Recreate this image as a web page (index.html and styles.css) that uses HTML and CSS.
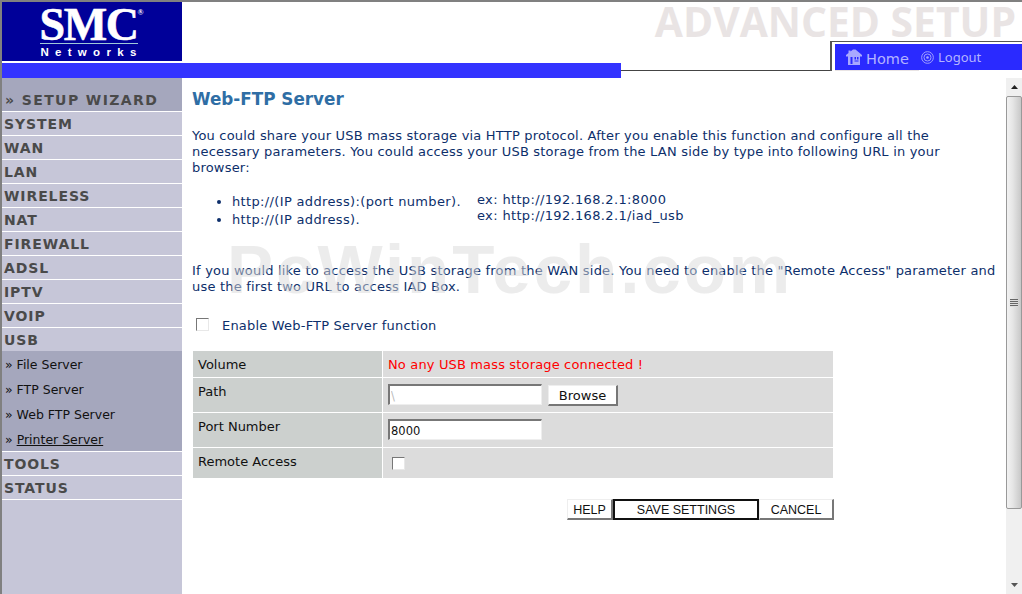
FILE: index.html
```html
<!DOCTYPE html>
<html lang="en">
<head>
<meta charset="utf-8">
<title>Web-FTP Server</title>
<link rel="stylesheet" href="styles.css">
</head>
<body>
<div class="page">
  <header class="header">
    <div class="logo">
      <div class="logo-smc">SMC<sup class="logo-r">®</sup></div>
      <div class="logo-net">Networks</div>
    </div>
    <div class="adv-title">ADVANCED SETUP</div>
    <div class="bar"></div>
    <div class="rule"></div>
    <div class="topnav">
      <nav class="topnav-in">
        <a class="home">
          <svg class="ic-home" viewBox="0 0 16 16" width="16" height="16"><path d="M7 0.500 L9.500 0.500 L16 6 V7.500 H14 V16 H2 V7.500 H0 V6 L2.500 4 V1.500 H4.500 V2.500 Z" fill="#a8a8ff"/><path d="M4.500 8 H6.500 V15 H4.500 Z M8.500 8 H10 V10.500 H8.500 Z M11 8 H12.500 V10.500 H11 Z M8.500 11.500 H12.500 V12.500 H8.500 Z" fill="#2a2aff"/></svg>
          <span>Home</span>
        </a>
        <a class="logout">
          <svg class="ic-logout" viewBox="0 0 14 14" width="13" height="13"><circle cx="7" cy="7" r="6.300" fill="none" stroke="#a8a8ff"/><circle cx="7" cy="7" r="3.800" fill="none" stroke="#a8a8ff"/><circle cx="7" cy="7" r="1.400" fill="#a8a8ff"/></svg>
          <span>Logout</span>
        </a>
      </nav>
      <div class="under"></div>
    </div>
  </header>
  <div class="body">
    <aside class="side">
      <div class="m m-wiz">» SETUP WIZARD</div>
      <div class="m">SYSTEM</div>
      <div class="m">WAN</div>
      <div class="m">LAN</div>
      <div class="m">WIRELESS</div>
      <div class="m">NAT</div>
      <div class="m">FIREWALL</div>
      <div class="m">ADSL</div>
      <div class="m">IPTV</div>
      <div class="m">VOIP</div>
      <div class="m m-usb">USB</div>
      <div class="sub">
        <div class="s">» File Server</div>
        <div class="s">» FTP Server</div>
        <div class="s">» Web FTP Server</div>
        <div class="s">» <u>Printer Server</u></div>
      </div>
      <div class="m">TOOLS</div>
      <div class="m">STATUS</div>
    </aside>
    <main class="main">
      <h1 class="h">Web-FTP Server</h1>
      <p class="p">You could share your USB mass storage via HTTP protocol. After you enable this function and configure all the<br>necessary parameters. You could access your USB storage from the LAN side by type into following URL in your<br>browser:</p>
      <div class="urls">
        <ul class="ul">
          <li>http://(IP address):(port number).</li>
          <li>http://(IP address).</li>
        </ul>
        <div class="ex">ex: http://192.168.2.1:8000<br>ex: http://192.168.2.1/iad_usb</div>
      </div>
      <p class="p p2">If you would like to access the USB storage from the WAN side. You need to enable the "Remote Access" parameter and<br>use the first two URL to access IAD Box.</p>
      <label class="enable"><input type="checkbox" class="cb cb-en"><span>Enable Web-FTP Server function</span></label>
      <div class="form">
        <div class="l r1">Volume</div><div class="v r1 err">No any USB mass storage connected !</div>
        <div class="l r2">Path</div><div class="v r2 fld"><input class="in" value="\"><button class="btn browse">Browse</button></div>
        <div class="l r3">Port Number</div><div class="v r3 fld"><input class="in in-dark" value="8000"></div>
        <div class="l r4">Remote Access</div><div class="v r4"><input type="checkbox" class="cb cb-ra"></div>
      </div>
      <div class="actions">
        <button class="abtn b-help">HELP</button><button class="abtn b-save">SAVE SETTINGS</button><button class="abtn b-cancel">CANCEL</button>
      </div>
      <div class="wm">PcWinTech.com</div>
    </main>
    <div class="sb">
      <div class="sb-btn"><svg width="7" height="4" viewBox="0 0 7 4"><path d="M3.500 0 L7 4 H0 Z" fill="#222"/></svg></div>
      <div class="sb-thumb"><div class="grip"></div></div>
      <div class="sb-track"></div>
      <div class="sb-btn"><svg width="7" height="4" viewBox="0 0 7 4"><path d="M0 0 H7 L3.500 4 Z" fill="#555"/></svg></div>
    </div>
  </div>
</div>
</body>
</html>
```
FILE: styles.css
```css
* { box-sizing: border-box; }
html, body { margin: 0; height: 100%; overflow: hidden; background: #fff; }
.page {
  width: 1022px; height: 594px; display: flex; flex-direction: column;
  border-top: 2px solid #808080; border-left: 2px solid #808080;
  font-family: "DejaVu Sans", Verdana, sans-serif; font-size: 13px;
}
.header {
  display: grid; flex: none; height: 76px;
  grid-template-columns: 180px 439px 209px 1fr;
  grid-template-rows: 39px 22px 8px 7px;
}
.logo {
  grid-column: 1; grid-row: 1 / 3; height: 59px; background: #000099; color: #fff;
  display: flex; flex-direction: column; align-items: center; padding-right: 7px;
}
.logo-smc {
  font-family: "Liberation Serif", serif; font-weight: 700; font-size: 46px; line-height: 37px;
  letter-spacing: -1.400px; margin-top: 4px; width: 98px; border-bottom: 1px solid #9fc8d8;
  height: 38px; white-space: nowrap; position: relative; -webkit-text-stroke: .6px #fff;
}
.logo-r { position: absolute; font-size: 8px; line-height: 8px; top: 3px; left: 98px; letter-spacing: 0; -webkit-text-stroke: 0; }
.logo-net {
  font-family: "Liberation Sans", sans-serif; font-weight: 700; font-size: 11.500px; line-height: 12px;
  letter-spacing: 6.300px; margin-top: 2px; margin-right: -6px;
}
.adv-title {
  grid-column: 2 / 5; grid-row: 1; justify-self: end; align-self: end;
  font-family: "Open Sans", sans-serif; font-weight: 700; font-size: 40.800px; line-height: 39px;
  color: #e9e4e4; padding-right: 6px; white-space: nowrap;
}
.bar { grid-column: 1 / 3; grid-row: 3 / 5; background: #3333ff; }
.rule { grid-column: 3; grid-row: 3; border-bottom: 1px solid #444; }
.topnav {
  grid-column: 4; grid-row: 2 / 4;
  border-left: 2px solid #555; border-top: 1px solid #555; padding: 2px 0 0 3px;
  display: flex; flex-direction: column;
}
.topnav-in {
  height: 26px; flex: none; background: #2a2aff; color: #b4b4ff; display: flex; align-items: center;
  padding-left: 11px;
}
.under { height: 1px; width: 84px; flex: none; background: #e9e4e4; }
.home { display: flex; align-items: center; gap: 4px; font-size: 14.500px; width: 75px; }
.home span { padding-top: 3px; }
.logout { display: flex; align-items: center; gap: 4px; font-family: "Noto Sans", sans-serif; font-size: 13px; }
.body { flex: 1; display: flex; min-height: 0; }
.side { width: 180px; flex: none; background: #c6c6d8; }
.m {
  height: 24px; border-bottom: 1px solid #fff; color: #4a4a4a; font-weight: 700; font-size: 14px;
  line-height: 25px; padding-left: 2px; letter-spacing: .900px; white-space: nowrap;
}
.m-wiz { height: 34px; background: #a5a7bd; padding-top: 10px; padding-left: 3px; letter-spacing: 1.400px; }
.m-usb { border-bottom: 0; height: 23px; }
.sub { height: 101px; background: #a5a7bd; border-bottom: 1px solid #fff; padding-top: 1px; }
.s { height: 25px; line-height: 25px; padding-left: 3px; color: #111; white-space: nowrap; font-size: 12.500px; }
.main { flex: 1; min-width: 0; position: relative; padding-left: 10px; color: #0d2f6b; line-height: 16px; letter-spacing: .200px; }
.h { margin: 11px 0 0; font-size: 16.800px; line-height: 20px; font-weight: 700; color: #2f6ea5; letter-spacing: 0; }
.p { margin: 19px 0 0; white-space: nowrap; }
.urls { display: flex; margin-top: 16px; letter-spacing: .350px; }
.ul { margin: 0; padding: 1px 0 0 40px; line-height: 18px; width: 285px; white-space: nowrap; }
.ex { white-space: nowrap; }
.p2 { margin-top: 34px; }
.enable { display: flex; align-items: center; margin-top: 23px; height: 16px; }
.cb {
  appearance: none; margin: 0; width: 13px; height: 13px; background: #fff;
  border: 1px solid #e8e8e8; border-top-color: #777; border-left-color: #777; display: block;
}
.cb-en { margin-left: 4px; margin-right: 13px; margin-top: -3px; }
.cb-ra { margin-left: 4px; margin-top: 3px; }
.form {
  display: grid; grid-template-columns: 190px 450px; grid-template-rows: 26px 34px 34px 30px;
  row-gap: 1px; margin-top: 17px; margin-left: 1px; width: 640px;
}
.l { background: #ccd0ce; color: #111; padding: 6px 0 0 5px; border-right: 1px solid #fff; letter-spacing: 0; }
.v { background: #dcdcdc; padding: 6px 0 0 5px; }
.err { color: #ff0000; letter-spacing: .150px; }
.fld { padding-top: 6px; display: flex; align-items: flex-start; gap: 6px; }
.in {
  width: 154px; height: 21px; font: inherit; font-size: 11.500px; padding: 1px 1px 0; background: #fff; color: #bbb;
  border: 1px solid #eee; border-top: 2px solid #777; border-left: 2px solid #777; outline: 0; letter-spacing: 0;
}
.in-dark { color: #111; }
.btn, .abtn {
  font-family: "Liberation Sans", sans-serif; background: #fff; color: #111;
  border: 1px solid #eee; border-right: 2px solid #777; border-bottom: 2px solid #777; padding: 0;
}
.browse { font-family: "DejaVu Sans", sans-serif; font-size: 13px; width: 70px; height: 21px; margin-top: 1px; }
.actions { display: flex; justify-content: flex-end; width: 641px; margin-top: 21px; margin-left: 1px; }
.abtn { font-size: 12.500px; height: 21px; padding-top: 1px; }
.b-help { width: 46px; }
.b-save { width: 146px; border: 2px solid #111; padding-top: 0; }
.b-cancel { width: 75px; }
.wm {
  position: absolute; left: 45px; top: 157px; font-family: "Liberation Sans", sans-serif; font-weight: 700;
  font-size: 69px; line-height: 69px; letter-spacing: 3px; color: rgba(217,217,217,.5); white-space: nowrap; pointer-events: none;
}
.sb { width: 16px; flex: none; background: #f0f0f0; display: flex; flex-direction: column; }
.sb-btn { height: 18px; display: flex; align-items: center; justify-content: center; flex: none; }
.sb-thumb {
  height: 413px; flex: none; border: 1px solid #999; border-radius: 2px;
  background: linear-gradient(to right, #f2f2f2, #e6e6e6 40%, #c8c8c8);
  display: flex; align-items: center; justify-content: center;
}
.grip { width: 8px; height: 8px; background: repeating-linear-gradient(to bottom, #666 0 1px, #ddd 1px 2px); }
.sb-track { flex: 1; }
```
